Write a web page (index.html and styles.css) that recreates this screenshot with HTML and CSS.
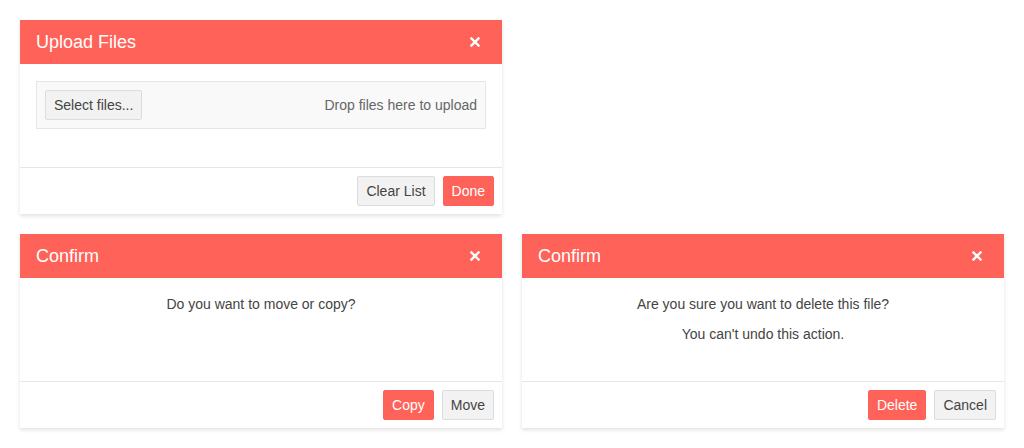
FILE: index.html
```html
<!DOCTYPE html>
<html>
<head>
<meta charset="utf-8">
<link rel="stylesheet" href="styles.css">
</head>
<body>
<div class="grid">
  <div class="window">
    <div class="titlebar">
      <span class="title">Upload Files</span>
      <span class="close"><svg width="10" height="10" viewBox="0 0 10 10"><path d="M1.5 1.5 L8.5 8.5 M8.5 1.5 L1.5 8.5" stroke="#fff" stroke-width="2.4" stroke-linecap="square"/></svg></span>
    </div>
    <div class="body upload-body">
      <div class="dropzone">
        <button class="btn">Select files...</button>
        <span class="drop-hint">Drop files here to upload</span>
      </div>
    </div>
    <div class="footer">
      <button class="btn">Clear List</button>
      <button class="btn primary">Done</button>
    </div>
  </div>
  <div></div>
  <div class="window">
    <div class="titlebar">
      <span class="title">Confirm</span>
      <span class="close"><svg width="10" height="10" viewBox="0 0 10 10"><path d="M1.5 1.5 L8.5 8.5 M8.5 1.5 L1.5 8.5" stroke="#fff" stroke-width="2.4" stroke-linecap="square"/></svg></span>
    </div>
    <div class="body message">
      <p>Do you want to move or copy?</p>
    </div>
    <div class="footer">
      <button class="btn primary">Copy</button>
      <button class="btn">Move</button>
    </div>
  </div>
  <div class="window">
    <div class="titlebar">
      <span class="title">Confirm</span>
      <span class="close"><svg width="10" height="10" viewBox="0 0 10 10"><path d="M1.5 1.5 L8.5 8.5 M8.5 1.5 L1.5 8.5" stroke="#fff" stroke-width="2.4" stroke-linecap="square"/></svg></span>
    </div>
    <div class="body message">
      <p>Are you sure you want to delete this file?</p>
      <p>You can't undo this action.</p>
    </div>
    <div class="footer">
      <button class="btn primary">Delete</button>
      <button class="btn">Cancel</button>
    </div>
  </div>
</div>
</body>
</html>
```

FILE: styles.css
```css
* { box-sizing: border-box; }
html, body { margin: 0; background: #fff; }
body {
  padding: 20px;
  font-family: "Liberation Sans", Arial, sans-serif;
  font-size: 14px;
  color: #444;
}
.grid {
  display: grid;
  grid-template-columns: 482px 482px;
  column-gap: 20px;
  row-gap: 20px;
}
.window {
  background: #fff;
  box-shadow: 0 2px 4px rgba(0,0,0,0.12);
}
.titlebar {
  height: 44px;
  background: #ff6259;
  color: #fff;
  display: flex;
  align-items: center;
  justify-content: space-between;
  padding: 0 16px;
}
.title { font-size: 18px; }
.close {
  width: 22px;
  height: 22px;
  display: flex;
  align-items: center;
  justify-content: center;
  margin-top: -1px;
}
.body {
  height: 103px;
  padding: 17px 16px 16px;
}
.dropzone {
  display: flex;
  align-items: center;
  justify-content: space-between;
  border: 1px solid #e6e6e6;
  background: #f9f9f9;
  padding: 8px;
}
.drop-hint { color: #666; }
.message { text-align: center; padding-top: 16px; }
.message p { margin: 0 0 10px; line-height: 20px; }
.footer {
  border-top: 1px solid #e6e6e6;
  padding: 8px;
  display: flex;
  justify-content: flex-end;
  gap: 8px;
}
.btn {
  font-family: "Liberation Sans", Arial, sans-serif;
  font-size: 14px;
  height: 30px;
  padding: 0 8px;
  border: 1px solid #dcdcdc;
  border-radius: 2px;
  background: #f2f2f2;
  color: #444;
  cursor: pointer;
}
.btn.primary {
  background: #ff6259;
  border-color: #ff6259;
  color: #fff;
}
```
